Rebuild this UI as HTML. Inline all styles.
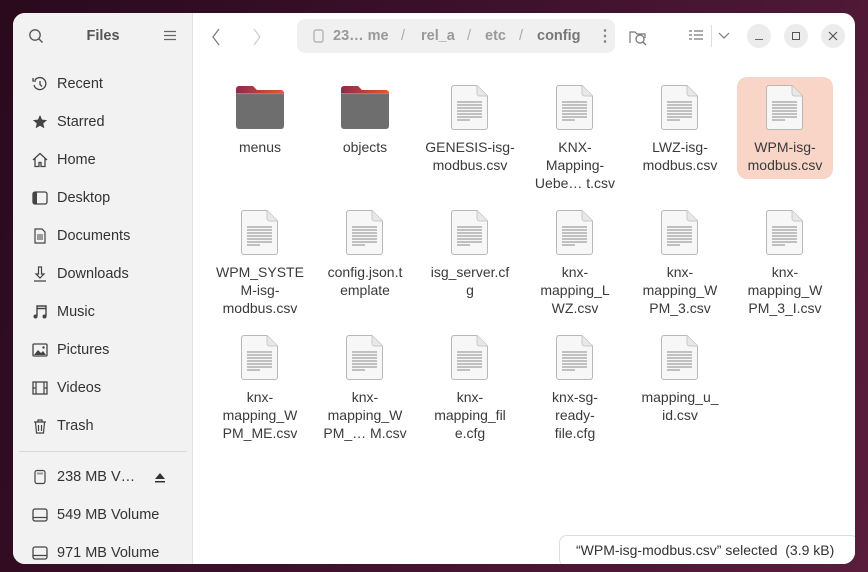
<!DOCTYPE html>
<html><head><meta charset="utf-8"><style>
*{margin:0;padding:0;box-sizing:border-box}
body{width:868px;height:572px;overflow:hidden;font-family:"Liberation Sans",sans-serif;background:linear-gradient(110deg,#2a0a1c 0%,#3a1028 40%,#5a1d3c 100%);position:relative}
.win{position:absolute;left:13px;top:13px;width:842px;height:551px;border-radius:12px;overflow:hidden;background:#fff}
.side{position:absolute;left:0;top:0;width:180px;height:100%;background:#f2f2f2;border-right:1px solid #e2e2e2}
.si{position:absolute;left:0;height:38px;width:180px;font-size:14.5px;color:#333}
.si svg{position:absolute;left:19px;top:12px}
.si span{position:absolute;left:44px;top:12px}
.it{position:absolute;width:104px;text-align:center;font-size:14px;line-height:18px;color:#3a3a3a}
.lab{position:absolute;top:52px;left:0;width:100%}
.ic{position:absolute;left:33px;top:0}
</style></head><body>
<svg width="1" height="1" style="position:absolute;left:0;top:0"><defs>
<linearGradient id="fg" x1="0" x2="1"><stop offset="0" stop-color="#8a2c4e"/><stop offset="1" stop-color="#e8562a"/></linearGradient>
<symbol id="doc" viewBox="0 0 38 47"><path d="M3 1.5h23l10.5 10.5v31a2.5 2.5 0 0 1-2.5 2.5H3A2.5 2.5 0 0 1 .5 43V4A2.5 2.5 0 0 1 3 1.5z" fill="#f7f7f7" stroke="#b8b8b8"/><path d="M26 1.5v8a2.5 2.5 0 0 0 2.5 2.5h8" fill="#e8e8e8" stroke="#c8c8c8"/><path d="M6 18h25M6 21h25M6 24h25M6 27h25M6 30h25M6 33h25M6 36h13" stroke="#888" stroke-width="1"/></symbol>
<symbol id="fold" viewBox="0 0 48 43"><path d="M3 0h14l4 4h24a3 3 0 0 1 3 3v10H0V3a3 3 0 0 1 3-3z" fill="url(#fg)"/><rect x="0" y="7" width="48" height="36" rx="3" fill="#6e6e6e"/><rect x="0" y="7" width="48" height="1.2" fill="#888"/></symbol>
</defs></svg>
<div class="win">
<div class="side">
 <svg style="position:absolute;left:15px;top:15px" width="16" height="16" viewBox="0 0 16 16"><circle cx="7" cy="7" r="5.2" fill="none" stroke="#555" stroke-width="1.3"/><line x1="11" y1="11" x2="14.5" y2="14.5" stroke="#555" stroke-width="1.4"/></svg>
 <div style="position:absolute;left:0;width:180px;top:15px;text-align:center;font-weight:bold;font-size:14.5px;color:#555">Files</div>
 <svg style="position:absolute;left:151px;top:17px" width="12" height="11"><path d="M0 1.5H12M0 5.5H12M0 9.5H12" stroke="#666" stroke-width="1.2"/></svg>
 <div class="si" style="top:51px"><svg width="16" height="16" viewBox="0 0 16 16"><path d="M3 4A6 6 0 1 1 2 9" fill="none" stroke="#444" stroke-width="1.3"/><path d="M1 2v3h3" fill="none" stroke="#444" stroke-width="1.3"/><path d="M8 5v3.5l2 2" fill="none" stroke="#444" stroke-width="1.3"/></svg><span>Recent</span></div>
 <div class="si" style="top:89px"><svg width="16" height="16" viewBox="0 0 16 16"><path d="M8 1l2.1 4.6 5 .5-3.8 3.3 1.1 4.9L8 11.8 3.6 14.3l1.1-4.9L.9 6.1l5-.5z" fill="#444"/></svg><span>Starred</span></div>
 <div class="si" style="top:127px"><svg width="16" height="16" viewBox="0 0 16 16"><path d="M1 8L8 1.5 15 8M3 6.5V14.5h4v-4h2v4h4V6.5" fill="none" stroke="#444" stroke-width="1.3"/></svg><span>Home</span></div>
 <div class="si" style="top:165px"><svg width="16" height="16" viewBox="0 0 16 16"><rect x="1" y="2" width="14" height="12" rx="2" fill="none" stroke="#444" stroke-width="1.3"/><rect x="1" y="2" width="4" height="12" fill="#444"/></svg><span>Desktop</span></div>
 <div class="si" style="top:203px"><svg width="16" height="16" viewBox="0 0 16 16"><path d="M3 1h7l3 3v11H3z" fill="none" stroke="#444" stroke-width="1.2"/><path d="M5 7h6M5 9h6M5 11h6" stroke="#444"/></svg><span>Documents</span></div>
 <div class="si" style="top:241px"><svg width="16" height="16" viewBox="0 0 16 16"><path d="M6.5 1v7H4l4 4 4-4H9.5V1zM2 15h12" fill="none" stroke="#444" stroke-width="1.2"/></svg><span>Downloads</span></div>
 <div class="si" style="top:279px"><svg width="16" height="16" viewBox="0 0 16 16"><path d="M5 12V2h9v10M5 4.5h9" fill="none" stroke="#444" stroke-width="1.4"/><circle cx="3.5" cy="12.5" r="2" fill="#444"/><circle cx="12.5" cy="12.5" r="2" fill="#444"/></svg><span>Music</span></div>
 <div class="si" style="top:317px"><svg width="16" height="16" viewBox="0 0 16 16"><rect x="1" y="2" width="14" height="12" rx="1" fill="none" stroke="#444" stroke-width="1.3"/><path d="M2 13l4-5 3 3 2-2 3 4z" fill="#444"/><circle cx="11.5" cy="5.5" r="1.2" fill="#444"/></svg><span>Pictures</span></div>
 <div class="si" style="top:355px"><svg width="16" height="16" viewBox="0 0 16 16"><rect x="1" y="2" width="14" height="12" fill="none" stroke="#444" stroke-width="1.3"/><path d="M4 2v12M12 2v12M1 8h3M12 8h3" stroke="#444" stroke-width="1.2"/></svg><span>Videos</span></div>
 <div class="si" style="top:393px"><svg width="16" height="16" viewBox="0 0 16 16"><path d="M2 4h12M6 4V2h4v2M3.5 4l1 11h7l1-11M6.5 7v6M9.5 7v6" fill="none" stroke="#444" stroke-width="1.2"/></svg><span>Trash</span></div>
 <div style="position:absolute;left:6px;width:168px;top:438px;border-top:1px solid #d8d8d8"></div>
 <div class="si" style="top:444px"><svg width="16" height="16" viewBox="0 0 16 16"><rect x="3" y="1.5" width="10" height="13" rx="2" fill="none" stroke="#444" stroke-width="1.2"/><path d="M6 3.5v2M8 3.5v2M10 3.5v2" stroke="#444"/></svg><span>238 MB V…</span><svg style="left:141px;top:14px" width="12" height="12"><path d="M6 2l5 6H1z M1 10h10v1.5H1z" fill="#333"/></svg></div>
 <div class="si" style="top:482px"><svg width="16" height="16" viewBox="0 0 16 16"><rect x="1" y="2" width="14" height="12" rx="2" fill="none" stroke="#444" stroke-width="1.3"/><path d="M1 10.5h14" stroke="#444" stroke-width="1.2"/></svg><span>549 MB Volume</span></div>
 <div class="si" style="top:520px"><svg width="16" height="16" viewBox="0 0 16 16"><rect x="1" y="2" width="14" height="12" rx="2" fill="none" stroke="#444" stroke-width="1.3"/><path d="M1 10.5h14" stroke="#444" stroke-width="1.2"/></svg><span>971 MB Volume</span></div>
</div>
<svg style="position:absolute;left:198px;top:15px" width="10" height="18"><path d="M8 1L2 9l6 8" fill="none" stroke="#777" stroke-width="1.2"/></svg>
<svg style="position:absolute;left:239px;top:15px" width="10" height="18"><path d="M2 1l6 8-6 8" fill="none" stroke="#ccc" stroke-width="1.2"/></svg>
<div style="position:absolute;left:284px;top:6px;width:318px;height:34px;background:#f0f0f0;border-radius:8px;font-size:14.5px;font-weight:bold;color:#999">
 <svg style="position:absolute;left:16px;top:10px" width="12" height="15"><rect x="1" y="1" width="9" height="12" rx="2" fill="none" stroke="#aaa" stroke-width="1.2"/></svg>
 <span style="position:absolute;left:36px;top:9px">23… me</span>
 <span style="position:absolute;left:104px;top:9px;font-weight:normal;color:#aaa">/</span>
 <span style="position:absolute;left:124px;top:9px">rel_a</span>
 <span style="position:absolute;left:170px;top:9px;font-weight:normal;color:#aaa">/</span>
 <span style="position:absolute;left:188px;top:9px">etc</span>
 <span style="position:absolute;left:222px;top:9px;font-weight:normal;color:#aaa">/</span>
 <span style="position:absolute;left:240px;top:9px;color:#777">config</span>
 <span style="position:absolute;left:300px;top:7px;color:#888;font-size:16px">⋮</span>
</div>
<svg style="position:absolute;left:615px;top:14px" width="20" height="20" viewBox="0 0 20 20"><path d="M2 16V5h5l2 2h8v4" fill="none" stroke="#777" stroke-width="1.2"/><circle cx="12" cy="12" r="4" fill="none" stroke="#777" stroke-width="1.3"/><path d="M15 15l3 3" stroke="#777" stroke-width="1.3"/></svg>
<svg style="position:absolute;left:676px;top:17px" width="14" height="12"><path d="M0 1h3M0 5h3M0 9h3M5 1h9M5 5h9M5 9h9" stroke="#777" stroke-width="1.2"/></svg>
<div style="position:absolute;left:698px;top:12px;height:22px;border-left:1px solid #ddd"></div>
<svg style="position:absolute;left:705px;top:19px" width="12" height="8"><path d="M1 1l5 5 5-5" fill="none" stroke="#777" stroke-width="1.2"/></svg>
<div style="position:absolute;left:734px;top:11px;width:24px;height:24px;border-radius:50%;background:#ececec"></div>
<div style="position:absolute;left:742px;top:26px;width:8px;border-top:1px solid #666"></div>
<div style="position:absolute;left:771px;top:11px;width:24px;height:24px;border-radius:50%;background:#ececec"></div>
<div style="position:absolute;left:779px;top:19px;width:8px;height:8px;border:1px solid #555"></div>
<div style="position:absolute;left:808px;top:11px;width:24px;height:24px;border-radius:50%;background:#ececec"></div>
<svg style="position:absolute;left:815px;top:18px" width="10" height="10"><path d="M1 1l8 8M9 1l-8 8" stroke="#555" stroke-width="1.2"/></svg>
<div style="position:absolute;left:724px;top:64px;width:96px;height:102px;background:#f8d5c7;border-radius:10px"></div>

<div class="it" style="left:195px;top:73px"><svg class="ic" style="left:28px" width="48" height="43"><use href="#fold"/></svg><div class="lab">menus</div></div>
<div class="it" style="left:300px;top:73px"><svg class="ic" style="left:28px" width="48" height="43"><use href="#fold"/></svg><div class="lab">objects</div></div>
<div class="it" style="left:405px;top:71px"><svg class="ic" width="38" height="47"><use href="#doc"/></svg><div class="lab" style="top:54px">GENESIS-isg-<br>modbus.csv</div></div>
<div class="it" style="left:510px;top:71px"><svg class="ic" width="38" height="47"><use href="#doc"/></svg><div class="lab" style="top:54px">KNX-<br>Mapping-<br>Uebe… t.csv</div></div>
<div class="it" style="left:615px;top:71px"><svg class="ic" width="38" height="47"><use href="#doc"/></svg><div class="lab" style="top:54px">LWZ-isg-<br>modbus.csv</div></div>
<div class="it" style="left:720px;top:71px"><svg class="ic" width="38" height="47"><use href="#doc"/></svg><div class="lab" style="top:54px">WPM-isg-<br>modbus.csv</div></div>

<div class="it" style="left:195px;top:196px"><svg class="ic" width="38" height="47"><use href="#doc"/></svg><div class="lab" style="top:54px">WPM_SYSTE<br>M-isg-<br>modbus.csv</div></div>
<div class="it" style="left:300px;top:196px"><svg class="ic" width="38" height="47"><use href="#doc"/></svg><div class="lab" style="top:54px">config.json.t<br>emplate</div></div>
<div class="it" style="left:405px;top:196px"><svg class="ic" width="38" height="47"><use href="#doc"/></svg><div class="lab" style="top:54px">isg_server.cf<br>g</div></div>
<div class="it" style="left:510px;top:196px"><svg class="ic" width="38" height="47"><use href="#doc"/></svg><div class="lab" style="top:54px">knx-<br>mapping_L<br>WZ.csv</div></div>
<div class="it" style="left:615px;top:196px"><svg class="ic" width="38" height="47"><use href="#doc"/></svg><div class="lab" style="top:54px">knx-<br>mapping_W<br>PM_3.csv</div></div>
<div class="it" style="left:720px;top:196px"><svg class="ic" width="38" height="47"><use href="#doc"/></svg><div class="lab" style="top:54px">knx-<br>mapping_W<br>PM_3_I.csv</div></div>

<div class="it" style="left:195px;top:321px"><svg class="ic" width="38" height="47"><use href="#doc"/></svg><div class="lab" style="top:54px">knx-<br>mapping_W<br>PM_ME.csv</div></div>
<div class="it" style="left:300px;top:321px"><svg class="ic" width="38" height="47"><use href="#doc"/></svg><div class="lab" style="top:54px">knx-<br>mapping_W<br>PM_… M.csv</div></div>
<div class="it" style="left:405px;top:321px"><svg class="ic" width="38" height="47"><use href="#doc"/></svg><div class="lab" style="top:54px">knx-<br>mapping_fil<br>e.cfg</div></div>
<div class="it" style="left:510px;top:321px"><svg class="ic" width="38" height="47"><use href="#doc"/></svg><div class="lab" style="top:54px">knx-sg-<br>ready-<br>file.cfg</div></div>
<div class="it" style="left:615px;top:321px"><svg class="ic" width="38" height="47"><use href="#doc"/></svg><div class="lab" style="top:54px">mapping_u_<br>id.csv</div></div>

<div style="position:absolute;left:546px;top:522px;width:300px;height:32px;background:#fff;border:1px solid #ddd;border-radius:8px;font-size:14px;color:#333;padding:6px 0 0 16px">“WPM-isg-modbus.csv” selected&nbsp; (3.9 kB)</div>
</div>
</body></html>
